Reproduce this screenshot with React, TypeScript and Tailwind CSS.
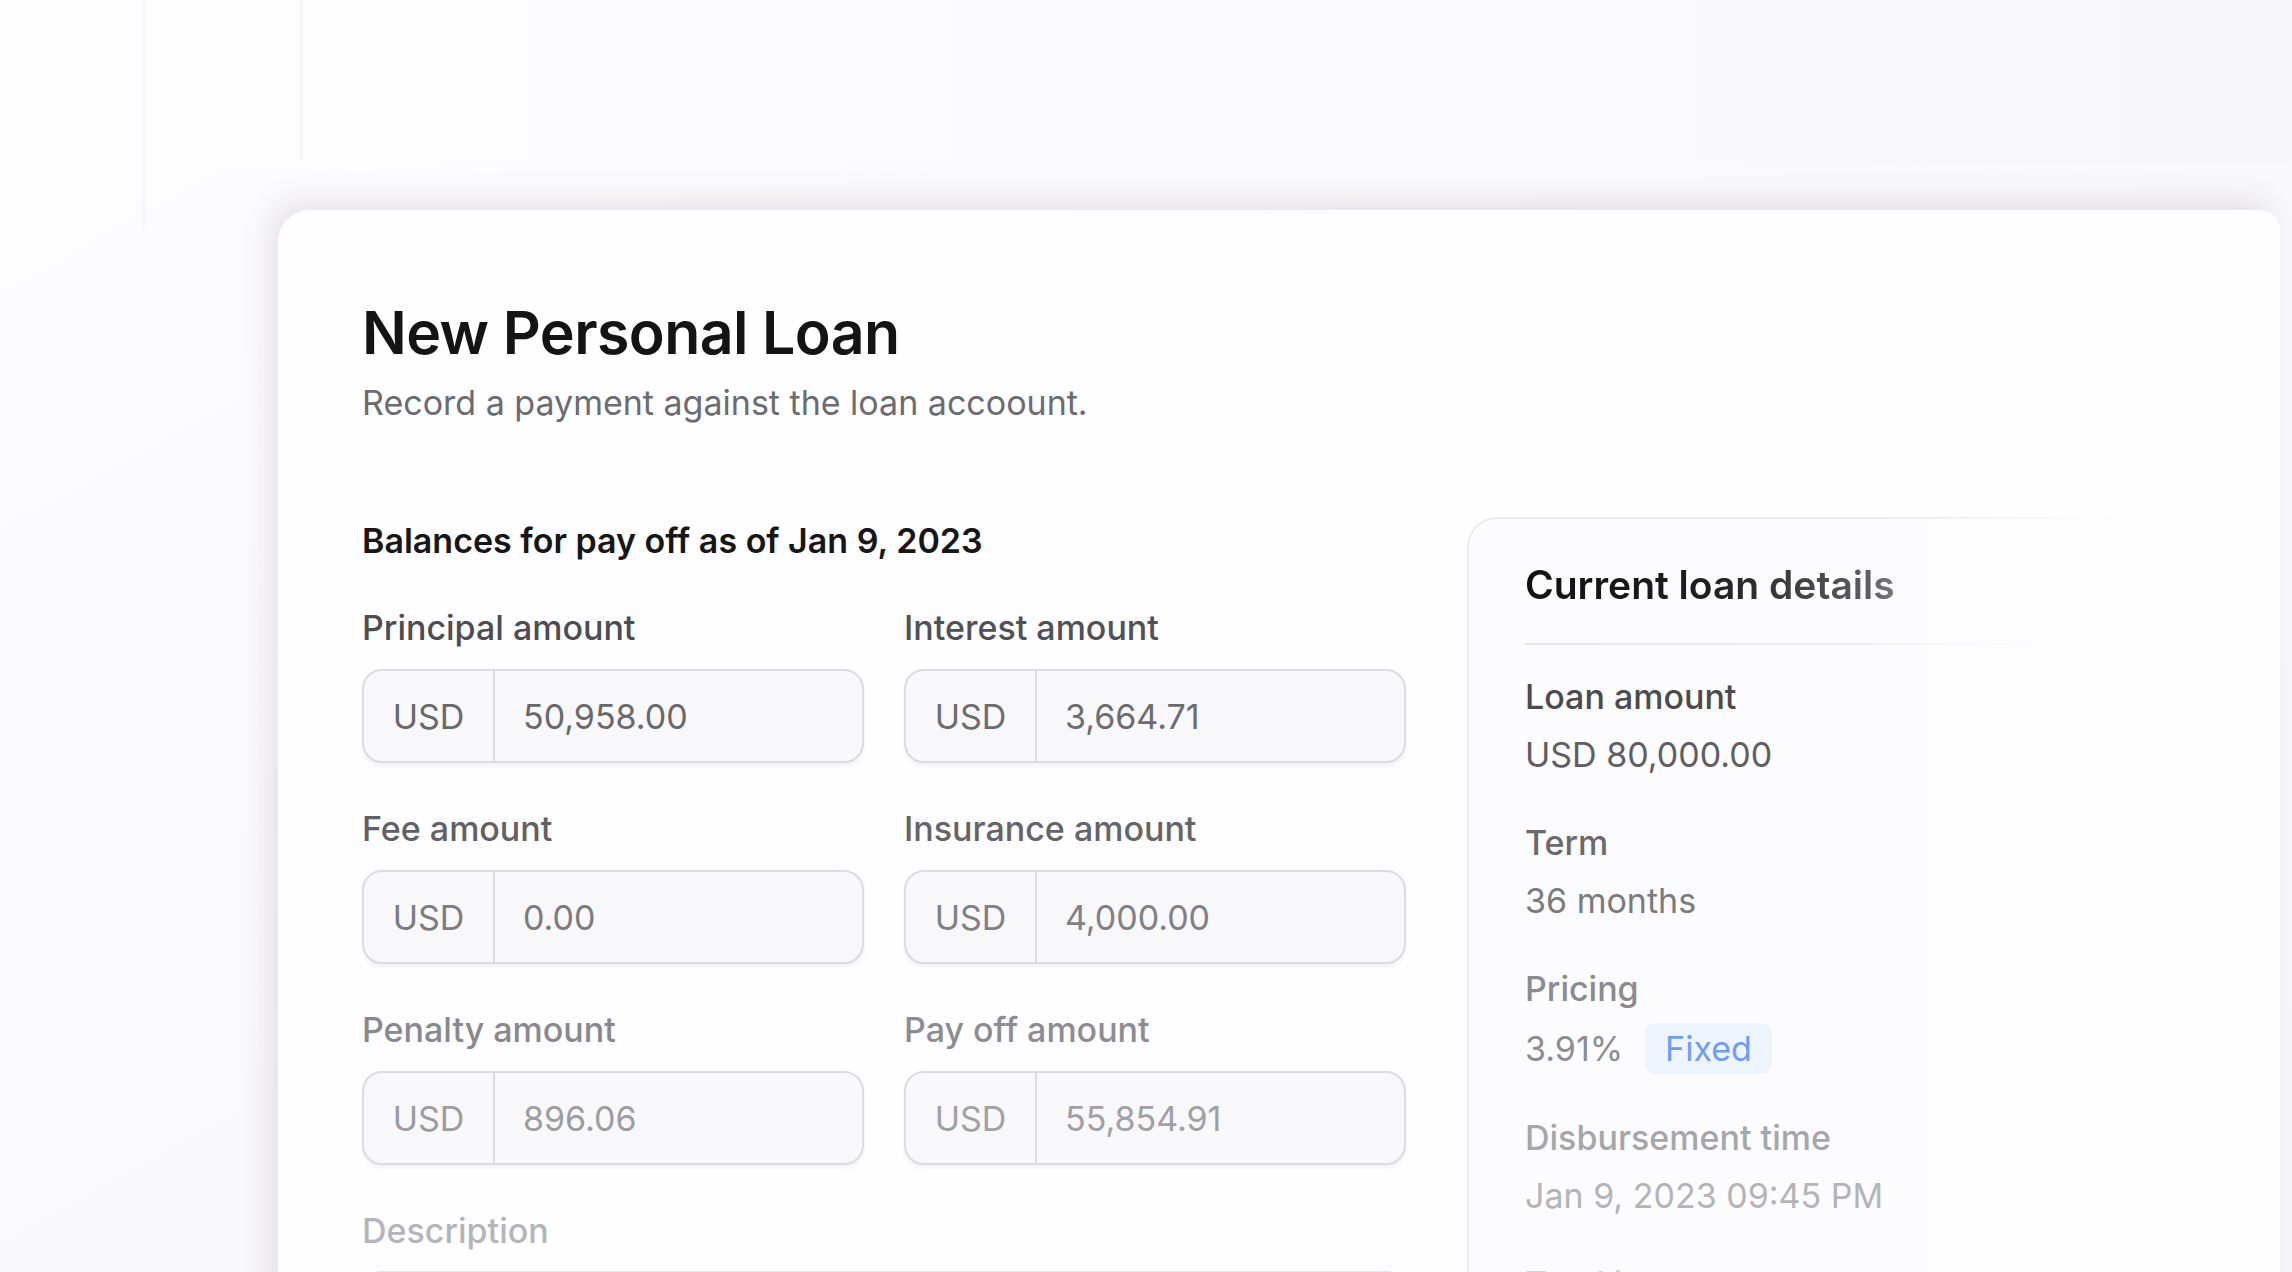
type Field = {
  label: string;
  value: string;
  labelColor: string;
  textColor: string;
};

const fields: Field[] = [
  { label: 'Principal amount', value: '50,958.00', labelColor: 'text-[#4c4c51]', textColor: 'text-[#68686d]' },
  { label: 'Interest amount', value: '3,664.71', labelColor: 'text-[#505055]', textColor: 'text-[#6c6c71]' },
  { label: 'Fee amount', value: '0.00', labelColor: 'text-[#606065]', textColor: 'text-[#7b7b80]' },
  { label: 'Insurance amount', value: '4,000.00', labelColor: 'text-[#646469]', textColor: 'text-[#808085]' },
  { label: 'Penalty amount', value: '896.06', labelColor: 'text-[#88888d]', textColor: 'text-[#9c9ca1]' },
  { label: 'Pay off amount', value: '55,854.91', labelColor: 'text-[#8c8c91]', textColor: 'text-[#a0a0a5]' },
];

const AmountField = ({ field }: { field: Field }) => {
  return (
    <div>
      <div className={`text-[34px] leading-[48px] font-medium ${field.labelColor}`}>{field.label}</div>
      <div className="mt-[17px] flex h-[94px] overflow-hidden rounded-[20px] border-2 border-[#dcdbe0] bg-[#f8f7fa] shadow-[0_3px_4px_rgba(30,20,50,0.05)]">
        <div className={`flex w-[131px] items-center justify-center border-r-2 border-[#dcdbe0] text-[34px] ${field.textColor}`}>
          USD
        </div>
        <div className={`flex items-center pl-[28px] text-[34px] ${field.textColor}`}>{field.value}</div>
      </div>
    </div>
  );
};

const Detail = ({
  label,
  labelColor,
  valueColor,
  children,
}: {
  label: string;
  labelColor: string;
  valueColor: string;
  children: React.ReactNode;
}) => {
  return (
    <div className="mb-[40px]">
      <div className={`text-[34px] leading-[48px] font-medium ${labelColor}`}>{label}</div>
      <div className={`mt-[10px] text-[34px] leading-[48px] ${valueColor}`}>{children}</div>
    </div>
  );
};

const App = () => {
  return (
    <div className="relative h-[1272px] w-full overflow-hidden bg-gradient-to-br from-[#fdfcfe] via-[#f9f8fb] to-[#f7f6f9] font-[Inter,sans-serif]">
      {/* faint blurred UI behind the card */}
      <div className="absolute left-0 top-0 h-[165px] w-[2292px] bg-gradient-to-r from-[#fdfcfe] via-[#fbfafc] to-[#f7f6f9]" />
      <div className="absolute left-[143px] top-0 h-[230px] w-[2px] bg-[#f6f5f8]" />
      <div className="absolute left-[300px] top-0 h-[160px] w-[2px] bg-[#f7f6f9]" />

      <div className="relative pl-[278px] pt-[210px]">
        {/* Main card */}
        <div className="relative min-h-[1200px] w-[2002px] rounded-tl-[32px] rounded-tr-[20px] bg-[#fefdff] pl-[84px] pt-[87px] shadow-[-10px_-10px_30px_rgba(40,30,60,0.10)]">
          <h1 className="text-[59px] leading-[72px] font-semibold tracking-[-0.01em] text-[#141414]">
            New Personal Loan
          </h1>
          <p className="mt-[10px] text-[34px] leading-[48px] text-[#6c6c70]">
            Record a payment against the loan accoount.
          </p>

          <div className="mt-[90px] flex items-start gap-[61px]">
            {/* Left column: balances form */}
            <div className="w-[1044px]">
              <h2 className="text-[34px] leading-[48px] font-semibold text-[#161616]">
                Balances for pay off as of Jan 9, 2023
              </h2>
              <div className="mt-[39px] grid grid-cols-2 gap-x-[40px] gap-y-[42px]">
                {fields.map((f) => (
                  <AmountField key={f.label} field={f} />
                ))}
              </div>
              <div className="mt-[42px]">
                <div className="text-[34px] leading-[48px] font-medium text-[#b5b5b9]">Description</div>
                <div className="mt-[16px] h-[120px] rounded-[20px] border-2 border-[#e6e5ea] bg-[#f9f8fb]" />
              </div>
            </div>

            {/* Right column: current loan details */}
            <aside className="relative min-h-[800px] w-[640px] rounded-tl-[30px] border-l-2 border-t-2 border-[#ebeaee] bg-[#fcfbfd] pl-[56px] pt-[40px]">
              <h3 className="w-fit bg-gradient-to-r from-[#111111] via-[#1f1f21] via-50% to-[#6a6a6e] bg-clip-text text-[39px] leading-[52px] font-semibold text-transparent">
                Current loan details
              </h3>
              <div className="mt-[32px] h-[2px] w-[540px] bg-gradient-to-r from-[#e8e7eb] via-[#ebeaee] to-transparent" />

              <div className="mt-[28px]">
                <Detail label="Loan amount" labelColor="text-[#4a4a4f]" valueColor="text-[#5e5e63]">
                  USD 80,000.00
                </Detail>
                <Detail label="Term" labelColor="text-[#69696e]" valueColor="text-[#7a7a7f]">
                  36 months
                </Detail>
                <Detail label="Pricing" labelColor="text-[#8a8a8f]" valueColor="text-[#8c8c91]">
                  <div className="flex items-center gap-[22px]">
                    <span>3.91%</span>
                    <span className="flex h-[51px] items-center rounded-[10px] bg-[#eef4fe] px-[20px] text-[#6e9df6]">
                      Fixed
                    </span>
                  </div>
                </Detail>
                <Detail label="Disbursement time" labelColor="text-[#a6a6aa]" valueColor="text-[#b4b4b8]">
                  Jan 9, 2023 09:45 PM
                </Detail>
                <Detail label="Total interest" labelColor="text-[#cfcfd2]" valueColor="text-[#d6d6d9]">
                  USD 5,634.71
                </Detail>
              </div>

              {/* fade toward the right edge */}
              <div className="pointer-events-none absolute -right-[2px] -top-[2px] bottom-0 w-[240px] bg-gradient-to-r from-transparent to-[#fdfcfe]" />
            </aside>
          </div>
        </div>
      </div>
    </div>
  );
};

export default App;
